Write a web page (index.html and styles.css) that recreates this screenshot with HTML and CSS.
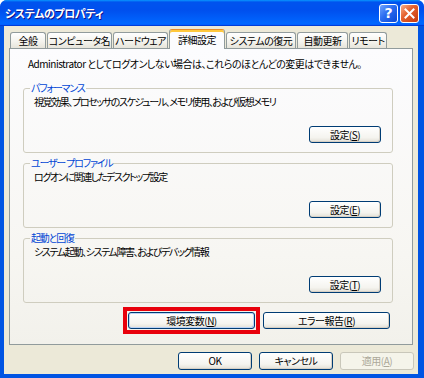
FILE: index.html
```html
<!DOCTYPE html>
<html lang="ja">
<head>
<meta charset="utf-8">
<title>システムのプロパティ</title>
<link rel="stylesheet" href="styles.css">
</head>
<body>
<div class="window">
  <div class="titlebar">
    <span class="title">システムのプロパティ</span>
    <div class="tb-buttons">
      <span class="tb-btn help">?</span>
      <span class="tb-btn close">
        <svg width="11" height="11" viewBox="0 0 11 11"><path d="M1.5 1.5 L9.5 9.5 M9.5 1.5 L1.5 9.5" stroke="#fff" stroke-width="2" stroke-linecap="square"/></svg>
      </span>
    </div>
  </div>
  <div class="client">
    <div class="tabs">
      <div class="tab t1">全般</div>
      <div class="tab t2">コンピュータ名</div>
      <div class="tab t3">ハードウェア</div>
      <div class="tab t4 active">詳細設定</div>
      <div class="tab t5">システムの復元</div>
      <div class="tab t6">自動更新</div>
      <div class="tab t7">リモート</div>
    </div>
    <div class="panel">
      <p class="note">Administrator としてログオンしない場合は、これらのほとんどの変更はできません。</p>
      <fieldset class="group">
        <legend>パフォーマンス</legend>
        <p class="desc">視覚効果、プロセッサのスケジュール、メモリ使用、および仮想メモリ</p>
        <div class="group-actions"><button class="btn">設定(<u>S</u>)</button></div>
      </fieldset>
      <fieldset class="group">
        <legend>ユーザー プロファイル</legend>
        <p class="desc">ログオンに関連したデスクトップ設定</p>
        <div class="group-actions"><button class="btn">設定(<u>E</u>)</button></div>
      </fieldset>
      <fieldset class="group">
        <legend>起動と回復</legend>
        <p class="desc">システム起動、システム障害、およびデバッグ情報</p>
        <div class="group-actions"><button class="btn">設定(<u>T</u>)</button></div>
      </fieldset>
      <div class="panel-actions">
        <span class="mark"><button class="btn wide focused">環境変数(<u>N</u>)</button></span>
        <button class="btn wide">エラー報告(<u>R</u>)</button>
      </div>
    </div>
    <div class="dialog-actions">
      <button class="btn dlg">OK</button>
      <button class="btn dlg">キャンセル</button>
      <button class="btn dlg" disabled>適用(<u>A</u>)</button>
    </div>
  </div>
</div>
</body>
</html>
```

FILE: styles.css
```css
* { box-sizing: border-box; }
html, body { margin: 0; padding: 0; }
body {
  width: 424px;
  height: 378px;
  overflow: hidden;
  background: #ffffff;
  font-family: "Noto Sans CJK JP", sans-serif;
  font-size: 10px;
  letter-spacing: -0.5px;
  font-feature-settings: "palt";
  color: #000;
}
.window {
  width: 424px;
  height: 378px;
  display: flex;
  flex-direction: column;
  background: #0054E3;
  border-radius: 7px 7px 0 0;
  overflow: hidden;
}
.titlebar {
  height: 26px;
  flex: none;
  display: flex;
  align-items: center;
  padding: 0 5px 0 5px;
  background: linear-gradient(180deg, #0997ff, #0053ee 8%, #0050ee 40%, #0066ff 88%, #0066ff 93%, #005bff 95%, #003dd7 96%, #003dd7);
}
.title {
  flex: 1;
  color: #fff;
  font-weight: bold;
  font-size: 11px;
  letter-spacing: -0.4px;
  text-shadow: 1px 1px #0f1089;
  line-height: 14px;
}
.tb-buttons { display: flex; gap: 2px; }
.tb-btn {
  width: 19px;
  height: 19px;
  border: 1px solid #fff;
  border-radius: 3px;
  display: flex;
  align-items: center;
  justify-content: center;
}
.help {
  background: linear-gradient(135deg, #6fa5ff, #2a6cf0 45%, #0b48d6);
  color: #fff;
  font: bold 14px "DejaVu Sans", sans-serif;
  letter-spacing: 0;
  line-height: 1;
}
.close {
  background: linear-gradient(135deg, #f7b08c, #e5622f 40%, #c6390e);
}
.client {
  flex: 1;
  margin: 0 6px 4px 4px;
  background: #ECE9D8;
  display: flex;
  flex-direction: column;
  padding: 3px 0 0 5px;
}
.tabs {
  display: flex;
  gap: 1px;
  height: 20px;
  margin-left: 1px;
  align-items: flex-end;
  position: relative;
  z-index: 1;
  margin-bottom: -1px;
}
.tab {
  height: 16px;
  margin-bottom: 1px;
  border: 1px solid #919B9C;
  border-bottom: none;
  border-radius: 3px 3px 0 0;
  background: linear-gradient(#ffffff, #f3f2ec 60%, #e6e4da);
  display: flex;
  align-items: center;
  justify-content: center;
  white-space: nowrap;
  line-height: 14px;
}
.tab.active {
  height: 20px;
  margin-bottom: 0;
  background: #FCFCFE;
  border-top: 1px solid #E68B2C;
  box-shadow: inset 0 2px #FFC83C;
  padding-top: 1px;
}
.t1 { width: 36px; }
.t2 { width: 65px; }
.t3 { width: 55px; }
.t4 { width: 56px; }
.t5 { width: 70px; }
.t6 { width: 51px; }
.t7 { width: 38px; }
.panel {
  height: 297px;
  width: 404px;
  border: 1px solid #919B9C;
  background: linear-gradient(#FCFCFE, #F7F6F2 70%, #F2F1EB);
  padding: 8px 0 0 13px;
}
.note {
  margin: 0 0 10px 5px;
  line-height: 14px;
  white-space: nowrap;
}
.group {
  margin: 0 0 3px;
  width: 370px;
  border: 1px solid #CFCDBF;
  border-radius: 3px;
  padding: 0 11px 9px 10px;
  min-width: 0;
}
.group legend {
  padding: 0 1px;
  margin-left: -4px;
  color: #0046D5;
  line-height: 14px;
  letter-spacing: -1.2px;
}
.desc {
  margin: 0;
  line-height: 14px;
  white-space: nowrap;
  letter-spacing: -1.4px;
}
.group-actions {
  display: flex;
  justify-content: flex-end;
  margin-top: 17px;
}
.btn {
  height: 17px;
  width: 72px;
  border: 1px solid #003C74;
  border-radius: 3px;
  background: linear-gradient(#ffffff, #f5f4ef 70%, #e3e0d6);
  box-shadow: inset -1px -1px #d6d0c5;
  font: inherit;
  letter-spacing: inherit;
  color: #000;
  padding: 0;
  display: inline-flex;
  align-items: center;
  justify-content: center;
  line-height: 14px;
  white-space: nowrap;
}
.btn u { text-underline-offset: 1px; }
.panel-actions {
  display: flex;
  gap: 8px;
  margin: 9px 0 0 105px;
}
.btn.wide { width: 127px; }
.mark {
  display: inline-flex;
  border: 4px solid #E8000B;
  padding: 1px;
  margin: -5px;
}
.btn.focused {
  box-shadow: inset 0 0 0 1px #bcd4f6, inset -1px -1px #89ade4;
}
.dialog-actions {
  display: flex;
  justify-content: flex-end;
  gap: 7px;
  margin-top: 7px;
  padding-right: 4px;
}
.btn.dlg { width: 74px; height: 18px; }
.btn:disabled {
  border-color: #C9C7BA;
  color: #ACA899;
  background: #F5F4EA;
  box-shadow: none;
}
```
